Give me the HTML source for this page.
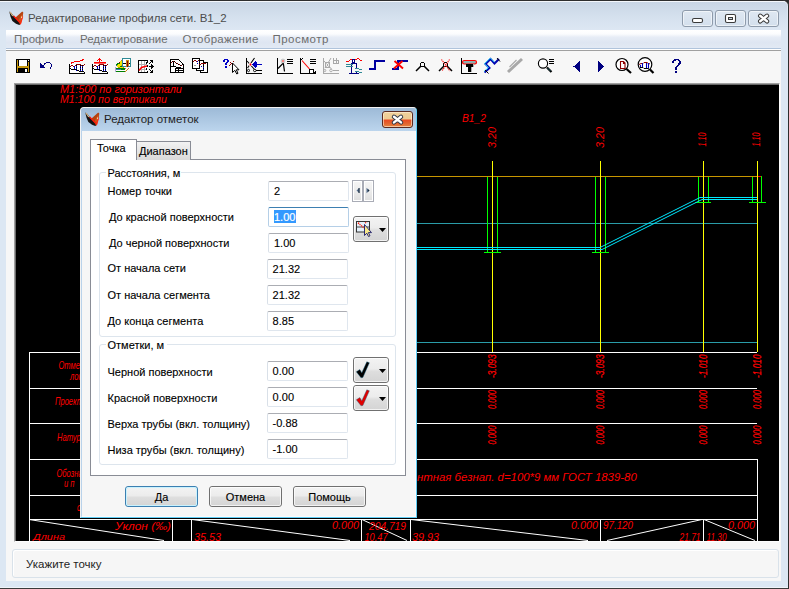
<!DOCTYPE html>
<html><head><meta charset="utf-8">
<style>
*{box-sizing:border-box;margin:0;padding:0}
html,body{width:789px;height:589px;overflow:hidden}
body{position:relative;background:#2e2e2e;font-family:"Liberation Sans",sans-serif;}
.a{position:absolute}
.t{position:absolute;white-space:nowrap;line-height:1}
.lbl{position:absolute;white-space:nowrap;line-height:1;font-size:11px;color:#000;-webkit-text-stroke:0.12px #000}
.ed{position:absolute;background:#fff;border:1px solid #dfe6ee;border-left-color:#d9e0e8;border-top-color:#abadb3;border-radius:2px}
.ed span{position:absolute;left:5px;top:4px;font-size:11px;line-height:1;color:#000;-webkit-text-stroke:0.12px #000}
.btn{position:absolute;border:1px solid #707070;border-radius:3px;background:linear-gradient(#f3f3f3 0%,#ececec 45%,#dedede 55%,#d4d4d4 100%);font-size:11px;text-align:center;line-height:20px;color:#000;-webkit-text-stroke:0.12px #000}
.btn:before{content:"";position:absolute;left:0;top:0;right:0;bottom:0;border:1px solid rgba(255,255,255,.7);border-radius:2px}
</style></head><body>

<!-- window outer frame -->
<div class="a" style="left:-8px;top:0;width:797px;height:589px;background:#dce7f3;border-radius:6px 6px 0 0;border:1px solid #2e2e2e;border-bottom-color:#3a3a3a"></div>
<div class="a" style="left:-7px;top:1px;width:795px;height:587px;border-radius:5px 5px 0 0;border:1px solid #f4f7fb;border-right:0;border-bottom-color:#f0f4f9"></div>

<!-- title bar gradient -->
<div class="a" style="left:0;top:2px;width:787px;height:28px;background:linear-gradient(#c9d6e5,#d6e2ef 60%,#dde7f3);border-top-right-radius:4px"></div>

<!-- window icon -->
<svg class="a" style="left:9px;top:11px" width="15" height="15" viewBox="0 0 15 15">
 <path d="M0.5 0.5 L1.8 1.3 L4.3 4.4 L10.8 11 L11.2 13.3 L10.3 14 L7 12.8 L3.4 10 L1.6 6 L0.6 2 Z" fill="#141414"/>
 <path d="M6.5 6.5 L13.2 0.6 L14.3 1.6 L13.6 6 L12.1 12 L11 13.6 L9.3 10.2 Z" fill="#b5420f"/>
 <path d="M9.5 9.5 L13.5 2 L13 6.5 L11.8 11.5 Z" fill="#cc5a1a"/>
 <path d="M4.6 4.9 L11 11.6" stroke="#ff1a0a" stroke-width="1.4"/>
 <path d="M13.6 5.5 L11.3 13.3" stroke="#ff2a10" stroke-width="1.3"/>
 <path d="M1 1 L3.8 5" stroke="#e6c08c" stroke-width="1.2"/>
 <ellipse cx="12.6" cy="6.3" rx="0.6" ry="1" fill="#f0d8a8"/>
</svg>
<div class="t" style="left:28px;top:13px;font-size:11.5px;color:#4c4c4c">Редактирование профиля сети. B1_2</div>

<!-- caption buttons -->
<div class="a" style="left:682px;top:10px;width:31px;height:17px;border:1px solid #8e9bab;border-radius:3px;background:linear-gradient(#dfe8f2,#d3dfec);box-shadow:inset 0 0 0 1px rgba(255,255,255,.55)"></div>
<div class="a" style="left:715px;top:10px;width:31px;height:17px;border:1px solid #8e9bab;border-radius:3px;background:linear-gradient(#dfe8f2,#d3dfec);box-shadow:inset 0 0 0 1px rgba(255,255,255,.55)"></div>
<div class="a" style="left:748px;top:10px;width:31px;height:17px;border:1px solid #8e9bab;border-radius:3px;background:linear-gradient(#dfe8f2,#d3dfec);box-shadow:inset 0 0 0 1px rgba(255,255,255,.55)"></div>
<svg class="a" style="left:680px;top:10px" width="100" height="18" shape-rendering="auto">
 <rect x="12.5" y="8.5" width="10" height="4" rx="1.5" fill="#fff" stroke="#3a3a3a" stroke-width="1.1"/>
 <rect x="45.5" y="4.5" width="10" height="8" rx="1.5" fill="#fff" stroke="#3a3a3a" stroke-width="1.1"/>
 <rect x="48.5" y="7.5" width="4" height="2" fill="#c8d4e0" stroke="#3a3a3a" stroke-width="1"/>
 <path d="M80.2 5.8 L87 11.3 M87 5.8 L80.2 11.3" stroke="#3a3a3a" stroke-width="4.4" stroke-linecap="round"/>
 <path d="M80.2 5.8 L87 11.3 M87 5.8 L80.2 11.3" stroke="#fff" stroke-width="2.4" stroke-linecap="round"/>
</svg>

<!-- client area -->
<div class="a" style="left:6px;top:30px;width:775px;height:551px;background:#f7f7f7"></div>
<!-- menu bar -->
<div class="a" style="left:6px;top:30px;width:775px;height:18px;background:linear-gradient(#ffffff 0%,#fbfcfe 22%,#e6ecf6 40%,#dee6f2 70%,#e2e9f4 100%)"></div>
<div class="a" style="left:6px;top:48px;width:775px;height:1px;background:#b0c4dc"></div>
<div class="a" style="left:6px;top:49px;width:775px;height:1px;background:#ffffff"></div>
<div class="a" style="left:6px;top:50px;width:775px;height:1px;background:#a0a0a0"></div>
<div class="t" style="left:14px;top:34px;font-size:11.5px;color:#6d6d6d">Профиль</div>
<div class="t" style="left:80px;top:34px;font-size:11.5px;color:#6d6d6d">Редактирование</div>
<div class="t" style="left:182.5px;top:34px;font-size:11.5px;color:#6d6d6d;letter-spacing:0.27px">Отображение</div>
<div class="t" style="left:272.4px;top:34px;font-size:11.5px;color:#6d6d6d;letter-spacing:0.5px">Просмотр</div>

<!-- toolbar placeholder -->
<!--TOOLBAR--><svg class="a" style="left:0;top:0" width="789" height="83" viewBox="0 0 789 83" shape-rendering="crispEdges">
<rect x="16" y="59" width="14" height="14" fill="#000"/>
<rect x="17" y="60" width="1" height="12" fill="#c89a10"/>
<rect x="28" y="62" width="1" height="10" fill="#c89a10"/>
<rect x="17" y="66" width="12" height="2" fill="#c89a10"/>
<rect x="19" y="60" width="8" height="6" fill="#fff"/>
<rect x="28" y="60" width="1" height="1" fill="#fff"/>
<rect x="25" y="69" width="2" height="3" fill="#fff"/>
<path d="M40 63 V68 H45 Z" fill="#000080" />
<rect x="46" y="62" width="1" height="1" fill="#000080"/>
<rect x="47" y="62" width="1" height="1" fill="#000080"/>
<rect x="48" y="62" width="1" height="1" fill="#000080"/>
<rect x="49" y="62" width="1" height="1" fill="#000080"/>
<rect x="45" y="63" width="1" height="1" fill="#000080"/>
<rect x="50" y="63" width="1" height="1" fill="#000080"/>
<rect x="44" y="64" width="1" height="1" fill="#000080"/>
<rect x="51" y="64" width="1" height="1" fill="#000080"/>
<rect x="43" y="65" width="1" height="1" fill="#000080"/>
<rect x="51" y="65" width="1" height="1" fill="#000080"/>
<rect x="51" y="66" width="1" height="1" fill="#000080"/>
<rect x="50" y="67" width="1" height="1" fill="#000080"/>
<rect x="50" y="68" width="1" height="1" fill="#000080"/>
<rect x="44" y="63" width="1" height="1" fill="#000080"/>
<rect x="70" y="64" width="15" height="9" fill="#fff"/>
<rect x="69" y="64" width="1" height="10" fill="#000"/>
<rect x="69" y="73" width="16" height="1" fill="#000"/>
<rect x="84" y="72" width="1" height="1" fill="#000"/>
<rect x="70" y="68" width="1" height="1" fill="#000"/>
<rect x="71" y="69" width="6" height="1" fill="#000"/>
<rect x="77" y="70" width="2" height="1" fill="#000"/>
<rect x="79" y="71" width="5" height="1" fill="#000"/>
<rect x="71" y="65" width="1" height="1" fill="#8c0000"/>
<rect x="72" y="65" width="1" height="1" fill="#8c0000"/>
<rect x="70" y="66" width="1" height="1" fill="#8c0000"/>
<rect x="73" y="66" width="1" height="1" fill="#8c0000"/>
<rect x="75" y="65" width="1" height="1" fill="#8c0000"/>
<rect x="81" y="65" width="1" height="1" fill="#8c0000"/>
<rect x="82" y="66" width="1" height="1" fill="#8c0000"/>
<rect x="83" y="65" width="1" height="1" fill="#8c0000"/>
<rect x="84" y="64" width="1" height="1" fill="#8c0000"/>
<rect x="76" y="64" width="5" height="1" fill="#8c0000"/>
<rect x="74" y="66" width="1" height="3" fill="#0000c0"/>
<rect x="76" y="65" width="1" height="1" fill="#000"/>
<rect x="76" y="66" width="1" height="1" fill="#0000c0"/>
<rect x="76" y="67" width="1" height="1" fill="#000"/>
<rect x="76" y="68" width="1" height="1" fill="#0000c0"/>
<rect x="76" y="69" width="1" height="1" fill="#000"/>
<rect x="76" y="70" width="1" height="1" fill="#0000c0"/>
<rect x="80" y="65" width="1" height="1" fill="#000"/>
<rect x="80" y="66" width="1" height="1" fill="#0000c0"/>
<rect x="80" y="67" width="1" height="1" fill="#000"/>
<rect x="80" y="68" width="1" height="1" fill="#0000c0"/>
<rect x="80" y="69" width="1" height="1" fill="#000"/>
<rect x="80" y="70" width="1" height="1" fill="#0000c0"/>
<rect x="82" y="65" width="1" height="1" fill="#000"/>
<rect x="82" y="66" width="1" height="1" fill="#0000c0"/>
<rect x="82" y="67" width="1" height="1" fill="#000"/>
<rect x="82" y="68" width="1" height="1" fill="#0000c0"/>
<rect x="82" y="69" width="1" height="1" fill="#000"/>
<rect x="82" y="70" width="1" height="1" fill="#0000c0"/>
<rect x="93" y="64" width="15" height="9" fill="#fff"/>
<rect x="92" y="64" width="1" height="10" fill="#000"/>
<rect x="92" y="73" width="16" height="1" fill="#000"/>
<rect x="107" y="72" width="1" height="1" fill="#000"/>
<rect x="93" y="68" width="1" height="1" fill="#000"/>
<rect x="94" y="69" width="6" height="1" fill="#000"/>
<rect x="100" y="70" width="2" height="1" fill="#000"/>
<rect x="102" y="71" width="5" height="1" fill="#000"/>
<rect x="94" y="65" width="1" height="1" fill="#8c0000"/>
<rect x="95" y="65" width="1" height="1" fill="#8c0000"/>
<rect x="93" y="66" width="1" height="1" fill="#8c0000"/>
<rect x="96" y="66" width="1" height="1" fill="#8c0000"/>
<rect x="98" y="65" width="1" height="1" fill="#8c0000"/>
<rect x="104" y="65" width="1" height="1" fill="#8c0000"/>
<rect x="105" y="66" width="1" height="1" fill="#8c0000"/>
<rect x="106" y="65" width="1" height="1" fill="#8c0000"/>
<rect x="107" y="64" width="1" height="1" fill="#8c0000"/>
<rect x="99" y="64" width="5" height="1" fill="#8c0000"/>
<rect x="97" y="66" width="1" height="3" fill="#0000c0"/>
<rect x="99" y="65" width="1" height="1" fill="#000"/>
<rect x="99" y="66" width="1" height="1" fill="#0000c0"/>
<rect x="99" y="67" width="1" height="1" fill="#000"/>
<rect x="99" y="68" width="1" height="1" fill="#0000c0"/>
<rect x="99" y="69" width="1" height="1" fill="#000"/>
<rect x="99" y="70" width="1" height="1" fill="#0000c0"/>
<rect x="103" y="65" width="1" height="1" fill="#000"/>
<rect x="103" y="66" width="1" height="1" fill="#0000c0"/>
<rect x="103" y="67" width="1" height="1" fill="#000"/>
<rect x="103" y="68" width="1" height="1" fill="#0000c0"/>
<rect x="103" y="69" width="1" height="1" fill="#000"/>
<rect x="103" y="70" width="1" height="1" fill="#0000c0"/>
<rect x="105" y="65" width="1" height="1" fill="#000"/>
<rect x="105" y="66" width="1" height="1" fill="#0000c0"/>
<rect x="105" y="67" width="1" height="1" fill="#000"/>
<rect x="105" y="68" width="1" height="1" fill="#0000c0"/>
<rect x="105" y="69" width="1" height="1" fill="#000"/>
<rect x="105" y="70" width="1" height="1" fill="#0000c0"/>
<rect x="71" y="62" width="1" height="2" fill="#ff0000"/>
<rect x="72" y="62" width="2" height="1" fill="#ff0000"/>
<rect x="74" y="61" width="6" height="1" fill="#ff0000"/>
<rect x="80" y="60" width="2" height="1" fill="#ff0000"/>
<rect x="82" y="59" width="1" height="2" fill="#ff0000"/>
<rect x="83" y="59" width="1" height="1" fill="#ff0000"/>
<rect x="94" y="62" width="12" height="1" fill="#ff0000"/>
<rect x="94" y="63" width="12" height="1" fill="#ff6060"/>
<rect x="99" y="58" width="1" height="4" fill="#ff0000"/>
<rect x="98" y="59" width="3" height="1" fill="#ff0000"/>
<rect x="97" y="60" width="1" height="1" fill="#ff0000"/>
<rect x="101" y="60" width="1" height="1" fill="#ff0000"/>
<rect x="121" y="60" width="1" height="1" fill="#c88a10"/>
<rect x="120" y="61" width="2" height="1" fill="#f0e800"/>
<rect x="119" y="62" width="1" height="1" fill="#8c0000"/>
<rect x="120" y="62" width="2" height="1" fill="#f0e800"/>
<rect x="117" y="63" width="3" height="1" fill="#008000"/>
<rect x="120" y="63" width="2" height="1" fill="#f0e800"/>
<rect x="116" y="64" width="2" height="1" fill="#008000"/>
<rect x="118" y="64" width="4" height="1" fill="#f0e800"/>
<rect x="116" y="65" width="1" height="1" fill="#2060a0"/>
<rect x="117" y="65" width="4" height="1" fill="#f0e800"/>
<rect x="121" y="65" width="1" height="1" fill="#c88a10"/>
<rect x="117" y="66" width="3" height="1" fill="#f0e800"/>
<rect x="120" y="66" width="2" height="1" fill="#008000"/>
<rect x="118" y="67" width="2" height="1" fill="#c88a10"/>
<rect x="120" y="67" width="3" height="1" fill="#f0e800"/>
<rect x="123" y="67" width="1" height="1" fill="#c88a10"/>
<rect x="116" y="68" width="9" height="1" fill="#008000"/>
<rect x="116" y="69" width="5" height="1" fill="#3a78b8"/>
<rect x="121" y="69" width="4" height="1" fill="#008000"/>
<rect x="116" y="70" width="9" height="1" fill="#fff"/>
<rect x="116" y="71" width="10" height="1" fill="#008000"/>
<rect x="115" y="67" width="1" height="5" fill="#b0a8d0"/>
<rect x="125" y="71" width="1" height="1" fill="#c88a10"/>
<rect x="126" y="70" width="1" height="1" fill="#c88a10"/>
<rect x="127" y="69" width="1" height="1" fill="#c88a10"/>
<rect x="128" y="68" width="1" height="1" fill="#c88a10"/>
<rect x="125" y="68" width="1" height="1" fill="#c88a10"/>
<rect x="122" y="58" width="9" height="9" fill="#2f8a96"/>
<rect x="123" y="59" width="7" height="7" fill="#fff"/>
<rect x="123" y="63" width="7" height="1" fill="#000"/>
<rect x="126" y="60" width="3" height="1" fill="#c88a10"/>
<rect x="126" y="61" width="1" height="6" fill="#c88a10"/>
<rect x="128" y="61" width="1" height="5" fill="#c88a10"/>
<rect x="127" y="61" width="1" height="6" fill="#8c0000"/>
<rect x="138" y="60" width="10" height="13" fill="#000"/>
<rect x="139" y="61" width="8" height="11" fill="#fff"/>
<rect x="141" y="61" width="1" height="11" fill="#b0b0b0"/>
<rect x="144" y="61" width="1" height="11" fill="#b0b0b0"/>
<rect x="139" y="64" width="8" height="1" fill="#b0b0b0"/>
<rect x="139" y="69" width="8" height="1" fill="#b0b0b0"/>
<rect x="147" y="63" width="1" height="8" fill="#fff"/>
<rect x="146" y="62" width="1" height="2" fill="#000"/>
<rect x="146" y="68" width="1" height="2" fill="#000"/>
<rect x="147" y="65" width="1" height="2" fill="#000"/>
<g shape-rendering="auto"><path d="M139 70.5 L141.5 67.5 L144 66.8 L147 66" stroke="#ff0000" stroke-width="1.5" fill="none"/></g>
<rect x="149" y="66" width="5" height="1" fill="#000"/>
<rect x="152" y="65" width="1" height="3" fill="#000"/>
<rect x="151" y="64" width="1" height="2" fill="#000"/>
<rect x="151" y="67" width="1" height="2" fill="#000"/>
<rect x="149" y="63" width="1" height="1" fill="#000"/>
<rect x="150" y="62" width="1" height="1" fill="#000"/>
<rect x="149" y="69" width="1" height="1" fill="#000"/>
<rect x="150" y="70" width="1" height="1" fill="#000"/>
<rect x="150" y="60" width="3" height="1" fill="#000"/>
<rect x="151" y="61" width="2" height="1" fill="#000"/>
<rect x="152" y="62" width="1" height="1" fill="#000"/>
<rect x="150" y="72" width="3" height="1" fill="#000"/>
<rect x="151" y="71" width="2" height="1" fill="#000"/>
<rect x="152" y="70" width="1" height="1" fill="#000"/>
<rect x="170" y="59" width="9" height="1" fill="#000"/>
<rect x="170" y="59" width="1" height="14" fill="#000"/>
<rect x="170" y="72" width="14" height="1" fill="#000"/>
<rect x="183" y="64" width="1" height="9" fill="#000"/>
<rect x="171" y="60" width="8" height="12" fill="#fff"/>
<rect x="179" y="61" width="4" height="11" fill="#fff"/>
<rect x="179" y="60" width="1" height="1" fill="#000"/>
<rect x="180" y="61" width="1" height="1" fill="#000"/>
<rect x="181" y="62" width="1" height="1" fill="#000"/>
<rect x="182" y="63" width="1" height="1" fill="#000"/>
<rect x="171" y="62" width="1" height="1" fill="#8c0000"/>
<rect x="172" y="61" width="1" height="1" fill="#000"/>
<rect x="173" y="61" width="1" height="1" fill="#8c0000"/>
<rect x="174" y="61" width="1" height="1" fill="#000"/>
<rect x="175" y="62" width="1" height="1" fill="#8c0000"/>
<rect x="176" y="63" width="1" height="1" fill="#000"/>
<rect x="177" y="63" width="1" height="1" fill="#8c0000"/>
<rect x="178" y="64" width="1" height="1" fill="#000"/>
<rect x="179" y="64" width="1" height="1" fill="#8c0000"/>
<rect x="180" y="65" width="1" height="1" fill="#000"/>
<rect x="181" y="65" width="1" height="1" fill="#8c0000"/>
<rect x="182" y="64" width="1" height="1" fill="#000"/>
<rect x="173" y="62" width="1" height="4" fill="#000"/>
<rect x="171" y="66" width="2" height="1" fill="#000"/>
<rect x="173" y="66" width="3" height="1" fill="#000"/>
<rect x="176" y="67" width="5" height="1" fill="#000"/>
<rect x="175" y="68" width="9" height="5" fill="#000"/>
<rect x="176" y="69" width="2" height="1" fill="#fff"/>
<rect x="179" y="69" width="4" height="1" fill="#fff"/>
<rect x="176" y="71" width="2" height="1" fill="#fff"/>
<rect x="179" y="71" width="4" height="1" fill="#fff"/>
<rect x="200" y="62" width="8" height="11" fill="#000"/>
<rect x="201" y="63" width="6" height="9" fill="#fff"/>
<rect x="196" y="60" width="8" height="11" fill="#000"/>
<rect x="197" y="61" width="6" height="9" fill="#fff"/>
<rect x="192" y="58" width="8" height="11" fill="#000"/>
<rect x="193" y="59" width="6" height="9" fill="#fff"/>
<rect x="193" y="61" width="1" height="1" fill="#8c0000"/>
<rect x="194" y="60" width="1" height="1" fill="#8c0000"/>
<rect x="195" y="60" width="1" height="1" fill="#8c0000"/>
<rect x="196" y="61" width="1" height="1" fill="#8c0000"/>
<rect x="197" y="61" width="1" height="1" fill="#0000c0"/>
<rect x="198" y="60" width="1" height="1" fill="#8c0000"/>
<rect x="197" y="63" width="1" height="1" fill="#0000c0"/>
<rect x="194" y="65" width="1" height="1" fill="#a0a0a0"/>
<rect x="195" y="65" width="1" height="1" fill="#a0a0a0"/>
<rect x="201" y="63" width="1" height="1" fill="#8c0000"/>
<rect x="202" y="63" width="1" height="1" fill="#8c0000"/>
<rect x="203" y="63" width="1" height="1" fill="#8c0000"/>
<rect x="204" y="63" width="1" height="1" fill="#8c0000"/>
<rect x="205" y="63" width="1" height="1" fill="#8c0000"/>
<rect x="201" y="66" width="1" height="1" fill="#0000c0"/>
<rect x="203" y="67" width="1" height="1" fill="#0000c0"/>
<rect x="203" y="69" width="1" height="1" fill="#0000c0"/>
<rect x="199" y="64" width="1" height="1" fill="#8c0000"/>
<rect x="200" y="64" width="1" height="1" fill="#8c0000"/>
<rect x="224" y="59" width="4" height="1" fill="#0000c8"/>
<rect x="223" y="60" width="2" height="2" fill="#0000c8"/>
<rect x="227" y="60" width="2" height="2" fill="#0000c8"/>
<rect x="226" y="62" width="2" height="1" fill="#0000c8"/>
<rect x="225" y="63" width="2" height="2" fill="#0000c8"/>
<rect x="225" y="66" width="2" height="2" fill="#0000c8"/>
<rect x="229" y="65" width="1" height="1" fill="#8c0000"/>
<rect x="230" y="64" width="1" height="1" fill="#8c0000"/>
<rect x="231" y="63" width="1" height="1" fill="#8c0000"/>
<rect x="233" y="61" width="1" height="1" fill="#8c0000"/>
<rect x="230" y="62" width="1" height="1" fill="#8c0000"/>
<rect x="233" y="64" width="1" height="1" fill="#8c0000"/>
<g shape-rendering="auto"><path d="M232.5 63 V72.5 L234.8 70.3 L236.8 74 L238 73.3 L236.3 69.8 H239 Z" fill="#fff" stroke="#000" stroke-width="1"/></g>
<rect x="246" y="58" width="1" height="16" fill="#000"/>
<rect x="246" y="73" width="16" height="1" fill="#000"/>
<rect x="247" y="73" width="2" height="0" fill="#000"/>
<g shape-rendering="auto"><path d="M247 61 L255 70 M254.5 58 L247.5 68" stroke="#000" stroke-width="1.1" fill="none"/></g>
<g shape-rendering="auto"><circle cx="250.5" cy="64.5" r="1.8" fill="#fff"/><ellipse cx="250.5" cy="64.5" rx="0.9" ry="1.2" fill="#f00"/></g>
<rect x="253" y="64" width="9" height="1" fill="#0000c0"/>
<path d="M252 64.5 L256 60.5 V68.5 Z" fill="#0000c0" />
<rect x="255" y="62" width="2" height="5" fill="#0000c0"/>
<g shape-rendering="auto"><ellipse cx="248.5" cy="70.5" rx="1" ry="1.2" fill="#fff" stroke="#000" stroke-width="0.9"/><ellipse cx="254.8" cy="70.5" rx="1.3" ry="1.2" fill="#fff" stroke="#000" stroke-width="0.9"/></g>
<rect x="256" y="70" width="6" height="1" fill="#000"/>
<rect x="277" y="58" width="1" height="16" fill="#000"/>
<rect x="277" y="73" width="16" height="1" fill="#000"/>
<g shape-rendering="auto"><path d="M278 68.5 L283.3 63 L284.5 71.5" stroke="#000" stroke-width="1.2" fill="none"/><circle cx="283" cy="61" r="1.9" fill="#eee" stroke="#aaa" stroke-width="0.7"/><circle cx="283" cy="61" r="0.8" fill="#f00"/></g>
<rect x="287" y="59" width="6" height="1" fill="#000"/>
<rect x="287" y="61" width="6" height="1" fill="#000"/>
<rect x="287" y="63" width="6" height="1" fill="#000"/>
<rect x="300" y="58" width="1" height="16" fill="#000"/>
<rect x="300" y="73" width="10" height="1" fill="#000"/>
<rect x="301" y="59" width="1" height="1" fill="#000"/>
<rect x="302" y="58" width="1" height="1" fill="#000"/>
<g shape-rendering="auto"><path d="M302 60.5 L309.5 69" stroke="#ff0000" stroke-width="1.1" fill="none"/></g>
<rect x="309" y="69" width="5" height="5" fill="#000"/>
<rect x="310" y="70" width="3" height="3" fill="#fff"/>
<rect x="314" y="72" width="2" height="1" fill="#000"/>
<rect x="315" y="71" width="1" height="1" fill="#000"/>
<rect x="314" y="73" width="2" height="1" fill="#000"/>
<rect x="310" y="59" width="6" height="1" fill="#000"/>
<rect x="310" y="61" width="6" height="1" fill="#000"/>
<rect x="310" y="63" width="6" height="1" fill="#000"/>
<rect x="323" y="58" width="1" height="16" fill="#a8a8a8"/>
<rect x="323" y="73" width="16" height="1" fill="#a8a8a8"/>
<g shape-rendering="auto"><path d="M324 61 L331.5 69 M331 58 L325 68" stroke="#a8a8a8" stroke-width="1" fill="none"/></g>
<rect x="325" y="62" width="5" height="6" fill="#a8a8a8"/>
<g shape-rendering="auto"><ellipse cx="327.5" cy="65" rx="1.4" ry="2" fill="#fff"/></g>
<rect x="327" y="64" width="1" height="2" fill="#a8a8a8"/>
<g shape-rendering="auto"><ellipse cx="324.8" cy="70.5" rx="1" ry="1.2" fill="none" stroke="#a8a8a8" stroke-width="0.9"/><ellipse cx="331" cy="70.5" rx="1.3" ry="1.3" fill="none" stroke="#a8a8a8" stroke-width="0.9"/></g>
<rect x="333" y="70" width="6" height="1" fill="#a8a8a8"/>
<rect x="333" y="58" width="1" height="6" fill="#a8a8a8"/>
<rect x="333" y="63" width="6" height="1" fill="#a8a8a8"/>
<rect x="334" y="60" width="5" height="1" fill="#a8a8a8"/>
<rect x="336" y="58" width="1" height="6" fill="#a8a8a8"/>
<rect x="338" y="60" width="1" height="4" fill="#a8a8a8"/>
<rect x="346" y="61" width="3" height="1" fill="#ff0000"/>
<rect x="349" y="60" width="1" height="1" fill="#ff0000"/>
<rect x="350" y="59" width="2" height="1" fill="#ff0000"/>
<rect x="355" y="59" width="2" height="1" fill="#ff0000"/>
<rect x="357" y="58" width="2" height="1" fill="#ff0000"/>
<rect x="359" y="59" width="1" height="1" fill="#ff0000"/>
<rect x="360" y="60" width="2" height="1" fill="#ff0000"/>
<rect x="352" y="59" width="3" height="4" fill="#000080"/>
<rect x="353" y="60" width="1" height="2" fill="#fff"/>
<rect x="351" y="63" width="6" height="1" fill="#000080"/>
<rect x="356" y="64" width="1" height="5" fill="#000080"/>
<rect x="351" y="64" width="1" height="9" fill="#000080"/>
<rect x="349" y="73" width="10" height="1" fill="#000080"/>
<rect x="356" y="71" width="1" height="2" fill="#000080"/>
<rect x="346" y="64" width="7" height="1" fill="#2f8a96"/>
<rect x="346" y="66" width="7" height="1" fill="#2f8a96"/>
<rect x="355" y="68" width="4" height="1" fill="#2f8a96"/>
<rect x="359" y="69" width="3" height="1" fill="#2f8a96"/>
<rect x="355" y="71" width="4" height="1" fill="#2f8a96"/>
<rect x="359" y="72" width="3" height="1" fill="#2f8a96"/>
<rect x="374" y="60" width="11" height="2" fill="#0000a0"/>
<rect x="374" y="60" width="2" height="10" fill="#0000a0"/>
<rect x="369" y="68" width="7" height="2" fill="#0000a0"/>
<rect x="397" y="60" width="11" height="2" fill="#0000a0"/>
<rect x="397" y="60" width="2" height="10" fill="#0000a0"/>
<rect x="392" y="68" width="7" height="2" fill="#0000a0"/>
<g shape-rendering="auto"><path d="M394.5 61 L403 68.5 M402.5 61 L394 68.5" stroke="#ff0000" stroke-width="1.9" fill="none"/></g>
<rect x="421" y="62" width="3" height="1" fill="#000"/>
<rect x="420" y="63" width="1" height="3" fill="#000"/>
<rect x="424" y="63" width="1" height="3" fill="#000"/>
<rect x="420" y="66" width="5" height="1" fill="#000"/>
<g shape-rendering="auto"><path d="M420.5 66.5 L416 71 M424.5 66.5 L429 71" stroke="#000" stroke-width="1.5" fill="none"/></g>
<rect x="444" y="62" width="3" height="1" fill="#000"/>
<rect x="443" y="63" width="1" height="3" fill="#000"/>
<rect x="447" y="63" width="1" height="3" fill="#000"/>
<rect x="443" y="66" width="5" height="1" fill="#000"/>
<g shape-rendering="auto"><path d="M443.5 66.5 L439 71 M447.5 66.5 L452 71" stroke="#000" stroke-width="1.5" fill="none"/></g>
<g shape-rendering="auto"><path d="M441.5 59.5 L450 71 M449.5 59.5 L442 71" stroke="#ff0000" stroke-width="1.1" stroke-dasharray="1.2 0.8" fill="none"/></g>
<rect x="461" y="58" width="1" height="16" fill="#000"/>
<rect x="461" y="73" width="16" height="1" fill="#000"/>
<g shape-rendering="auto"><rect x="462.5" y="60.5" width="14" height="3.5" rx="1.7" fill="#8fb0b0" stroke="#ff0000" stroke-width="1.2"/></g>
<rect x="466" y="64" width="7" height="3" fill="#000"/>
<rect x="468" y="67" width="3" height="5" fill="#000"/>
<rect x="473" y="64" width="1" height="3" fill="#b0b0b0"/>
<rect x="471" y="67" width="1" height="5" fill="#b0b0b0"/>
<g shape-rendering="auto"><path d="M484.5 72.5 L489.5 68 L485.5 64 L490.5 59 L494.5 63.5 L499 59" stroke="#0000b0" stroke-width="2" fill="none" stroke-linejoin="miter"/><path d="M484 71.5 L488.5 67.5 L484.5 63.8 L490.3 58 L494.5 62.3" stroke="#20e0ff" stroke-width="0.9" fill="none"/><path d="M485 70 L488.5 73.5 M497 58 L500 61.5" stroke="#000" stroke-width="1" fill="none"/></g>
<g shape-rendering="auto"><path d="M508 72 L522 59" stroke="#a8a8a8" stroke-width="3" fill="none"/><path d="M509.5 67 L516.5 60" stroke="#a8a8a8" stroke-width="1.1" fill="none"/></g>
<g shape-rendering="auto"><circle cx="543" cy="63.5" r="4.6" fill="#fff" stroke="#000" stroke-width="1.1"/><path d="M547 67.5 L551.5 72" stroke="#000" stroke-width="2.2"/><path d="M547.5 68 L551 71.5" stroke="#3a98a8" stroke-width="0.8" stroke-dasharray="1 0.6"/></g>
<rect x="549" y="59" width="5" height="1" fill="#000"/>
<rect x="549" y="61" width="5" height="1" fill="#000"/>
<rect x="549" y="63" width="5" height="1" fill="#000"/>
<path d="M573.5 66.5 L580 61 V72 Z" fill="#000080" />
<path d="M604.5 66.5 L598 61 V72 Z" fill="#000080" />
<g shape-rendering="auto"><circle cx="622" cy="64.5" r="6" fill="#fff" stroke="#000" stroke-width="1.2"/><path d="M626.5 69 L631 73" stroke="#000" stroke-width="2.2"/><path d="M620.5 61.5 H623.5 L625 63 V68.5 H620.5 Z M623.5 61.5 V63.5 H625" stroke="#8c0000" stroke-width="1.1" fill="none"/></g>
<g shape-rendering="auto"><circle cx="645" cy="64.5" r="6.8" fill="#fff" stroke="#000" stroke-width="1.2"/><path d="M650 69.5 L653.5 73" stroke="#000" stroke-width="2.2"/><path d="M639 64.5 L641 63.5 H643 L644 62.5 H647 L649 64 L650 63.5" stroke="#8c0000" stroke-width="1" fill="none"/><path d="M640.5 65 V67.5 M642.5 63 V67.5 M646.5 63 V68.5 M648.5 63 V68.5" stroke="#0000c0" stroke-width="1.1" fill="none"/><path d="M640 67.5 H643 L644 68.5 H648 L649.5 69.5" stroke="#000" stroke-width="1" fill="none"/></g>
<rect x="674" y="59" width="5" height="1" fill="#000080"/>
<rect x="673" y="60" width="3" height="1" fill="#000080"/>
<rect x="678" y="60" width="2" height="1" fill="#000080"/>
<rect x="672" y="61" width="2" height="2" fill="#000080"/>
<rect x="679" y="61" width="2" height="2" fill="#000080"/>
<rect x="678" y="63" width="3" height="1" fill="#000080"/>
<rect x="678" y="64" width="2" height="1" fill="#000080"/>
<rect x="677" y="65" width="2" height="1" fill="#000080"/>
<rect x="676" y="66" width="2" height="1" fill="#000080"/>
<rect x="675" y="67" width="2" height="3" fill="#000080"/>
<rect x="675" y="71" width="2" height="2" fill="#000080"/>
</svg><!--/TOOLBAR-->

<!-- canvas -->
<div class="a" style="left:14px;top:83px;width:766px;height:459px;background:#000;border:1px solid #a0a0a0;border-right-color:#fdfdfd;border-bottom-color:#fdfdfd;box-shadow:inset 1px 1px 0 #696969"></div>
<svg id="cad" class="a" style="left:0;top:0" width="789" height="589" viewBox="0 0 789 589" shape-rendering="crispEdges">
<defs><clipPath id="cv"><rect x="15" y="84" width="764" height="457"/></clipPath></defs>
<g clip-path="url(#cv)">
<g fill="#ff0000" font-family="Liberation Sans" font-style="italic" shape-rendering="auto">
 <text x="60" y="92.6" font-size="10.9">М1:500 по горизонтали</text>
 <text x="60" y="102.6" font-size="10.55">М1:100 по вертикали</text>
 <text x="462" y="121.5" font-size="11" textLength="24" lengthAdjust="spacingAndGlyphs">В1_2</text>
 <text transform="translate(495.8,148) rotate(-90)" font-size="11.5" textLength="21" lengthAdjust="spacingAndGlyphs">3.20</text>
 <text transform="translate(603.8,148) rotate(-90)" font-size="11.5" textLength="21" lengthAdjust="spacingAndGlyphs">3.20</text>
 <text transform="translate(706.2,146.5) rotate(-90)" font-size="11.5" textLength="14" lengthAdjust="spacingAndGlyphs">1.10</text>
 <text transform="translate(760.2,146.5) rotate(-90)" font-size="11.5" textLength="14" lengthAdjust="spacingAndGlyphs">1.10</text>
</g>
<g stroke-width="1" fill="none">
 <path d="M417 176.5 H758" stroke="#c89600"/>
 <path d="M758 176.5 H761" stroke="#ff0000"/>
 <path d="M417 223.5 H757" stroke="#2a9ca8"/>
 <path d="M417 342.5 H757" stroke="#2a9ca8"/>
 <path d="M492.5 161 V352 M600.5 161 V352 M703.5 161 V352 M757.5 161 V352" stroke="#ffff00"/>
 <path d="M487.5 177 V252 M497.5 177 V252 M595.5 177 V252 M605.5 177 V252 M698.5 177 V202 M708.5 177 V202 M752.5 177 V202 M761.5 176 V202" stroke="#00ff00"/>
 <path d="M484 252.5 H501 M592 252.5 H609 M695 202.5 H711 M749 202.5 H766" stroke="#00ff00"/>
 <path d="M417 247.5 H600 L700 197.5 H757 M417 249.5 H602 L702 199.5 H757" stroke="#00e8ff" shape-rendering="auto"/>
 <path d="M29 352.5 H757 M29 388.5 H757 M29 423.5 H757 M29 459.5 H758 M29 495.5 H758 M29 519.5 H758" stroke="#ffffff"/>
 <path d="M29.5 352 V541 M757.5 459 V541" stroke="#ffffff"/>
 <path d="M172.5 519 V541 M191.5 519 V541 M361.5 519 V541 M410.5 519 V541 M600.5 519 V541 M703.5 519 V541" stroke="#ffffff"/>
 <path d="M29 519.5 L164 540.5 M192 519.5 L350 540.5 M362 519.5 L407 540.5 M411 519.5 L588 540.5 M607 540.5 L702 519.5 M704 519.5 L755 540.5" stroke="#ffffff" shape-rendering="auto"/>
</g>
<g fill="#ff0000" font-family="Liberation Sans" font-style="italic" shape-rendering="auto">
 <text transform="translate(58.5,369) scale(0.72,1)" font-size="10.5">Отметки</text>
 <text transform="translate(70,379.5) scale(0.72,1)" font-size="10.5">лотка</text>
 <text transform="translate(55,405) scale(0.72,1)" font-size="10.5">Проектные</text>
 <text transform="translate(57,441) scale(0.72,1)" font-size="10.5">Натурные</text>
 <text transform="translate(56.5,477) scale(0.72,1)" font-size="10.5">Обозначение</text>
 <text transform="translate(64,486.5) scale(0.72,1)" font-size="10.5">и п</text>
 <text transform="translate(77,511) scale(0.72,1)" font-size="10.5">с</text>
 <text x="33" y="540" font-size="9.8" textLength="32" lengthAdjust="spacingAndGlyphs">Длина</text>
 <text x="115" y="529.5" font-size="11.5" textLength="56" lengthAdjust="spacingAndGlyphs">Уклон (‰)</text>
 <text x="194" y="541" font-size="11.2" textLength="27" lengthAdjust="spacingAndGlyphs">35.53</text>
 <text x="332" y="528.5" font-size="10.5" textLength="27" lengthAdjust="spacingAndGlyphs">0.000</text>
 <text x="369" y="529.5" font-size="10.5" textLength="37" lengthAdjust="spacingAndGlyphs">204.719</text>
 <text x="364.5" y="541" font-size="11.2" textLength="23" lengthAdjust="spacingAndGlyphs">10.47</text>
 <text x="412" y="541" font-size="11.2" textLength="27" lengthAdjust="spacingAndGlyphs">39.93</text>
 <text x="571" y="528.5" font-size="10.5" textLength="27" lengthAdjust="spacingAndGlyphs">0.000</text>
 <text x="603" y="528.5" font-size="10.5" textLength="30" lengthAdjust="spacingAndGlyphs">97.120</text>
 <text x="679.5" y="541" font-size="11.5" textLength="21" lengthAdjust="spacingAndGlyphs">21.71</text>
 <text x="706.5" y="541" font-size="11.5" textLength="20" lengthAdjust="spacingAndGlyphs">11.30</text>
 <text x="728" y="528.5" font-size="10.5" textLength="27" lengthAdjust="spacingAndGlyphs">0.000</text>
 <text x="417" y="480.5" font-size="11.4">нтная безнап. d=100*9 мм ГОСТ 1839-80</text>
 </g>
<g fill="#ff0000" stroke="#ff0000" stroke-width="0.25" font-family="Liberation Sans" font-style="italic" shape-rendering="auto">
 <text transform="translate(495.8,378) rotate(-90)" font-size="11" textLength="23.5" lengthAdjust="spacingAndGlyphs">-3.093</text>
 <text transform="translate(495.8,409) rotate(-90)" font-size="11" textLength="19" lengthAdjust="spacingAndGlyphs">0.000</text>
 <text transform="translate(495.8,444.5) rotate(-90)" font-size="11" textLength="19" lengthAdjust="spacingAndGlyphs">0.000</text>
 <text transform="translate(603.8,378) rotate(-90)" font-size="11" textLength="23.5" lengthAdjust="spacingAndGlyphs">-3.093</text>
 <text transform="translate(603.8,409) rotate(-90)" font-size="11" textLength="19" lengthAdjust="spacingAndGlyphs">0.000</text>
 <text transform="translate(603.8,444.5) rotate(-90)" font-size="11" textLength="19" lengthAdjust="spacingAndGlyphs">0.000</text>
 <text transform="translate(706.8,378) rotate(-90)" font-size="11" textLength="23.5" lengthAdjust="spacingAndGlyphs">-1.010</text>
 <text transform="translate(706.8,409) rotate(-90)" font-size="11" textLength="19" lengthAdjust="spacingAndGlyphs">0.000</text>
 <text transform="translate(706.8,444.5) rotate(-90)" font-size="11" textLength="19" lengthAdjust="spacingAndGlyphs">0.000</text>
 <text transform="translate(760.8,378) rotate(-90)" font-size="11" textLength="23.5" lengthAdjust="spacingAndGlyphs">-1.010</text>
 <text transform="translate(760.8,409) rotate(-90)" font-size="11" textLength="19" lengthAdjust="spacingAndGlyphs">0.000</text>
 <text transform="translate(760.8,444.5) rotate(-90)" font-size="11" textLength="19" lengthAdjust="spacingAndGlyphs">0.000</text>
</g>
</g>
</svg>

<!-- status bar -->
<div class="a" style="left:12px;top:549px;width:767px;height:29px;border:1px solid #d9e2ea;border-radius:3px;background:#f6f6f6;box-shadow:inset 1px 1px 0 #fff"></div>
<div class="t" style="left:26px;top:559px;font-size:11.5px;color:#1e1e1e">Укажите точку</div>

<!-- dialog -->
<div id="dlg">
<!-- frame -->
<div class="a" style="left:80px;top:107px;width:337px;height:411px;background:#f6f6f6;border-radius:4px 4px 0 0;border:1px solid #f2f2f2;border-right-color:#5fcdf5;border-bottom-color:#5fcdf5"></div>
<div class="a" style="left:81px;top:108px;width:335px;height:409px;border:1px solid #b9d2ea;border-right-color:#fbfbfb;border-bottom-color:#fbfbfb;border-radius:3px 3px 0 0"></div>
<div class="a" style="left:81px;top:108px;width:335px;height:23px;border-radius:3px 3px 0 0;background:linear-gradient(#9dbad7,#bcd5ed)"></div>
<svg class="a" style="left:85px;top:112px" width="15" height="15" viewBox="0 0 15 15">
 <path d="M0.5 0.5 L1.8 1.3 L4.3 4.4 L10.8 11 L11.2 13.3 L10.3 14 L7 12.8 L3.4 10 L1.6 6 L0.6 2 Z" fill="#141414"/>
 <path d="M6.5 6.5 L13.2 0.6 L14.3 1.6 L13.6 6 L12.1 12 L11 13.6 L9.3 10.2 Z" fill="#b5420f"/>
 <path d="M9.5 9.5 L13.5 2 L13 6.5 L11.8 11.5 Z" fill="#cc5a1a"/>
 <path d="M4.6 4.9 L11 11.6" stroke="#ff1a0a" stroke-width="1.4"/>
 <path d="M13.6 5.5 L11.3 13.3" stroke="#ff2a10" stroke-width="1.3"/>
 <path d="M1 1 L3.8 5" stroke="#e6c08c" stroke-width="1.2"/>
 <ellipse cx="12.6" cy="6.3" rx="0.6" ry="1" fill="#f0d8a8"/>
</svg>
<div class="t" style="left:104px;top:114px;font-size:11.5px;color:#1e1e1e">Редактор отметок</div>
<div class="a" style="left:382px;top:111px;width:31px;height:17px;border:1px solid #5a2a20;border-radius:3px;background:linear-gradient(#efd19c 0%,#edcb92 46%,#e84a22 54%,#e2622e 75%,#e8843e 100%);box-shadow:inset 0 0 0 1px rgba(255,240,220,.6)"></div>
<svg class="a" style="left:390px;top:113px" width="15" height="13" viewBox="0 0 15 13">
 <path d="M4 3.8 L11 9.4 M11 3.8 L4 9.4" stroke="#343a48" stroke-width="4.4" stroke-linecap="round"/>
 <path d="M4 3.8 L11 9.4 M11 3.8 L4 9.4" stroke="#fff" stroke-width="2.4" stroke-linecap="round"/>
</svg>

<!-- tab panel -->
<div class="a" style="left:90px;top:159px;width:316px;height:317px;background:#fff;border:1px solid #898c95"></div>
<div class="a" style="left:136px;top:141px;width:55px;height:19px;border:1px solid #898c95;border-bottom:none;background:linear-gradient(#f2f2f2,#d9d9d9)"></div>
<div class="a" style="left:90px;top:139px;width:47px;height:21px;border:1px solid #898c95;border-bottom:none;background:#fff"></div>
<div class="lbl" style="left:97px;top:143px">Точка</div>
<div class="lbl" style="left:139px;top:145.5px">Диапазон</div>

<!-- group 1 -->
<div class="a" style="left:99px;top:172px;width:297px;height:165px;border:1px solid #dde5ed;border-radius:3px"></div>
<div class="a" style="left:106px;top:167px;width:75px;height:10px;background:#fff"></div>
<div class="lbl" style="left:107.5px;top:168px">Расстояния, м</div>
<div class="lbl" style="left:107.5px;top:186px">Номер точки</div>
<div class="lbl" style="left:109px;top:212px">До красной поверхности</div>
<div class="lbl" style="left:109px;top:238px">До черной поверхности</div>
<div class="lbl" style="left:107.5px;top:263px">От начала сети</div>
<div class="lbl" style="left:107.5px;top:290px">От начала сегмента</div>
<div class="lbl" style="left:107.5px;top:316px">До конца сегмента</div>

<div class="ed" style="left:268px;top:181px;width:81px;height:20px"><span>2</span></div>
<div class="ed" style="left:268px;top:207px;width:81px;height:20px;border-color:#b5cfe7;border-top-color:#3c7fb1"><span style="left:5px;top:2px;background:#3399ff;color:#fff;-webkit-text-stroke:0.2px #fff;padding:2px 1px 1px 0;height:13px">1.00</span></div>
<div class="ed" style="left:268px;top:233px;width:81px;height:20px"><span>1.00</span></div>
<div class="ed" style="left:267px;top:259px;width:81px;height:20px"><span style="left:4.6px">21.32</span></div>
<div class="ed" style="left:267px;top:285px;width:81px;height:20px"><span style="left:4.6px">21.32</span></div>
<div class="ed" style="left:267px;top:311px;width:81px;height:20px"><span style="left:4.6px">8.85</span></div>

<!-- spin -->
<div class="a" style="left:352px;top:180px;width:11px;height:22px;border:1px solid #a9acb6;box-shadow:inset 0 0 0 1px #fff;background:linear-gradient(#f6f6f6,#ececec 50%,#dedede)"></div>
<div class="a" style="left:363px;top:180px;width:11px;height:22px;border:1px solid #a9acb6;box-shadow:inset 0 0 0 1px #fff;background:linear-gradient(#f6f6f6,#ececec 50%,#dedede)"></div>
<svg class="a" style="left:352px;top:180px" width="22" height="22"><path d="M4.5 10.5 L7.5 7.8 V13.2 Z" fill="#5a7290"/><path d="M7 8 V13" stroke="#1a2a3a" stroke-width="1"/><path d="M17.5 10.5 L14.5 7.8 V13.2 Z" fill="#5a7290"/><path d="M17.5 10.5 L15.8 9 V12Z" fill="#1a2a3a"/></svg>

<!-- icon dropdown -->
<div class="btn" style="left:353px;top:216px;width:36px;height:26px"></div>
<svg class="a" style="left:353px;top:216px" width="36" height="26" shape-rendering="auto">
 <rect x="3.5" y="5.5" width="13" height="10.5" fill="#e4f0fa" stroke="#333" stroke-width="1"/>
 <path d="M4 11 H16" stroke="#333" stroke-width="0.9"/>
 <path d="M5 7 L8 9.5 L11 12 L13 14 M12 7 L14 6 M6 6.5 L5 8" stroke="#ff1a00" stroke-width="1.3" stroke-dasharray="1.2 0.8" fill="none"/>
 <path d="M11.5 8.5 L11.5 19.5 L13.8 17.2 L15.5 20.5 L17 19.8 L15.4 16.6 L18.5 16.6 Z" fill="#f8e88a" stroke="#1a1a6a" stroke-width="0.9"/>
 <path d="M26 12 H33 L29.5 16 Z" fill="#000"/>
</svg>

<!-- group 2 -->
<div class="a" style="left:99px;top:344px;width:297px;height:121px;border:1px solid #dde5ed;border-radius:3px"></div>
<div class="a" style="left:106px;top:339px;width:61px;height:10px;background:#fff"></div>
<div class="lbl" style="left:107.5px;top:340px">Отметки, м</div>
<div class="lbl" style="left:107.5px;top:366.5px">Черной поверхности</div>
<div class="lbl" style="left:107.5px;top:392.5px">Красной поверхности</div>
<div class="lbl" style="left:107.5px;top:418.5px">Верха трубы (вкл. толщину)</div>
<div class="lbl" style="left:107.5px;top:444.5px">Низа трубы (вкл. толщину)</div>
<div class="ed" style="left:267px;top:361px;width:81px;height:20px"><span style="left:4.6px">0.00</span></div>
<div class="ed" style="left:267px;top:387px;width:81px;height:20px"><span style="left:4.6px">0.00</span></div>
<div class="ed" style="left:267px;top:413px;width:81px;height:20px"><span style="left:4.6px">-0.88</span></div>
<div class="ed" style="left:267px;top:439px;width:81px;height:20px"><span style="left:4.6px">-1.00</span></div>

<div class="btn" style="left:353px;top:357px;width:36px;height:26px"></div>
<svg class="a" style="left:353px;top:357px" width="36" height="26" shape-rendering="auto">
 <path d="M3.3 14.8 L6.8 12.6 L8.8 15.8 L13.8 4.8 L16.4 5.8 L9.9 20.4 L8 20.8 Z" fill="#000" stroke="#1a6a8a" stroke-width="0.4"/>
 <path d="M26 12 H33 L29.5 16 Z" fill="#000"/>
</svg>
<div class="btn" style="left:353px;top:385px;width:36px;height:26px"></div>
<svg class="a" style="left:353px;top:385px" width="36" height="26" shape-rendering="auto">
 <path d="M3.3 14.8 L6.8 12.6 L8.8 15.8 L13.8 4.8 L16.4 5.8 L9.9 20.4 L8 20.8 Z" fill="#e00000" stroke="#1a6a8a" stroke-width="0.4"/>
 <path d="M26 12 H33 L29.5 16 Z" fill="#000"/>
</svg>

<!-- buttons -->
<div class="btn" style="left:125px;top:486px;width:73px;height:21px;border-color:#3c7fb1;box-shadow:inset 0 0 0 1px #4cd3fb">Да</div>
<div class="btn" style="left:209px;top:486px;width:73px;height:21px">Отмена</div>
<div class="btn" style="left:293px;top:486px;width:73px;height:21px">Помощь</div>
</div>

</body></html>
